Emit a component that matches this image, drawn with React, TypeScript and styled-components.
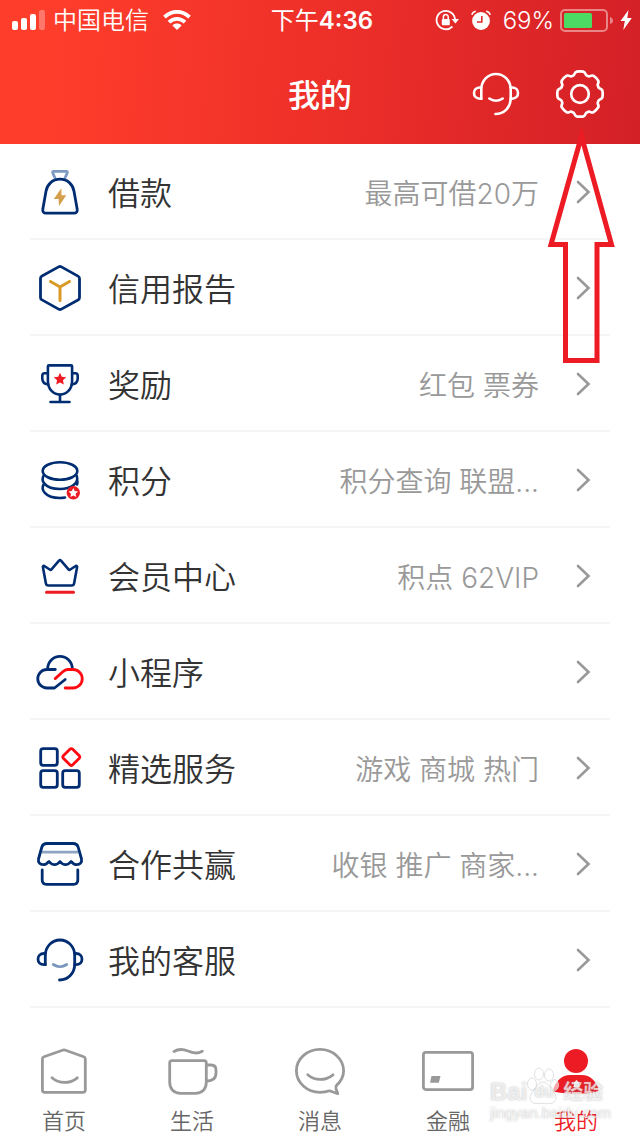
import React from "react";
import styled, { createGlobalStyle, css } from "styled-components";

const NAVY = "#002d72";
const RED = "#ed1b24";
const GREY = "#999999";

const GlobalStyle = createGlobalStyle`
  * { box-sizing: border-box; }
  body {
    margin: 0;
    background: #fff;
    color: #333;
    font-family: Inter, "Noto Sans CJK SC", sans-serif;
  }
  a { color: inherit; text-decoration: none; }
`;

const Page = styled.div`
  position: relative;
  display: flex;
  flex-direction: column;
  min-height: 100vh;
  overflow: hidden;
`;

const Header = styled.header`
  color: #fff;
  background: linear-gradient(94deg, #ff3d2b 8%, #ed2f29 52%, #d32027 100%);
`;

const StatusBar = styled.div`
  display: grid;
  grid-template-columns: 1fr auto 1fr;
  align-items: center;
  height: 40px;
  padding: 0 8px 0 12px;
  font-size: 24px;
  line-height: 32px;
`;

const StatusGroup = styled.div<{ $end?: boolean }>`
  display: flex;
  align-items: center;
  justify-content: ${(p) => (p.$end ? "flex-end" : "flex-start")};
  gap: ${(p) => (p.$end ? 12 : 8)}px;
`;

const StatusText = styled.span`
  padding-top: 2px;
  font-weight: 350;
`;

const Power = styled.span`
  display: flex;
  align-items: center;
  gap: 6px;
`;

const Carrier = styled(StatusText)`
  margin-right: 6px;
`;

const Clock = styled.time`
  padding-top: 2px;
  font-weight: 400;
`;

const Digits = styled.span`
  font-weight: 600;
`;

const TitleBar = styled.div`
  display: grid;
  grid-template-columns: 1fr auto 1fr;
  align-items: center;
  height: 104px;
  padding: 4px 36px 0;
`;

const Title = styled.h1`
  grid-column: 2;
  margin: 0;
  padding-top: 4px;
  font-size: 32px;
  line-height: 44px;
  font-weight: 500;
`;

const Actions = styled.div`
  display: flex;
  justify-content: flex-end;
  gap: 36px;
`;

const IconButton = styled.button`
  display: flex;
  padding: 0;
  border: 0;
  background: none;
  color: inherit;
  cursor: pointer;
`;

const Menu = styled.ul`
  margin: 0;
  padding: 0 30px;
  list-style: none;
`;

const MenuLink = styled.a`
  display: flex;
  align-items: center;
  height: 96px;
  padding: 2px 19px 0 6px;
  border-bottom: 2px solid #f5f5f5;
`;

const menuText = css`
  padding-top: 4px;
  line-height: 44px;
  font-weight: 350;
  white-space: nowrap;
`;

const MenuLabel = styled.span`
  ${menuText}
  flex: 1;
  margin-left: 24px;
  font-size: 32px;
`;

const MenuHint = styled.span`
  ${menuText}
  margin-right: 36px;
  color: ${GREY};
  font-size: 28px;
`;

const TabBar = styled.nav`
  display: flex;
  margin-top: auto;
  padding-top: 8px;
`;

const Tab = styled.a<{ $active?: boolean }>`
  flex: 1;
  display: flex;
  flex-direction: column;
  align-items: center;
  gap: 8px;
  color: ${(p) => (p.$active ? RED : "#666")};
  font-size: 22px;
  line-height: 30px;
  font-weight: 350;
`;

const Pointer = styled.svg`
  position: absolute;
  top: 124px;
  right: 24px;
  pointer-events: none;
`;

const Watermark = styled.div`
  position: absolute;
  right: 32px;
  bottom: 15px;
  width: 118px;
  color: rgba(255, 255, 255, 0.7);
  font-family: "Liberation Sans", "Noto Sans CJK SC", sans-serif;
  text-shadow: 0 0 2px rgba(130, 130, 130, 0.55);
  pointer-events: none;
`;

const WatermarkBrand = styled.div`
  display: flex;
  align-items: flex-end;
  font-size: 24px;
  line-height: 26px;
  font-weight: 700;
`;

const WatermarkTopic = styled.span`
  margin-left: 4px;
  font-size: 20px;
`;

const PawMark = styled.span`
  position: relative;
  display: block;
  width: 32px;
  height: 38px;
`;

const PawText = styled.span`
  position: absolute;
  left: 7px;
  bottom: 0;
  font-size: 16px;
`;

const WatermarkSite = styled.div`
  font-size: 15px;
  line-height: 16px;
`;

type LineProps = {
  size: number;
  color?: string;
  width?: number;
  children: React.ReactNode;
};

const Line = ({ size, color = "currentColor", width = 2.8, children }: LineProps) => (
  <svg
    width={size}
    height={size}
    viewBox={`0 0 ${size} ${size}`}
    fill="none"
    stroke={color}
    strokeWidth={width}
    strokeLinecap="round"
    strokeLinejoin="round"
    aria-hidden="true"
  >
    {children}
  </svg>
);

const polar = (cx: number, cy: number, r: number, deg: number) => {
  const a = ((deg - 90) * Math.PI) / 180;
  return `${(cx + r * Math.cos(a)).toFixed(2)} ${(cy + r * Math.sin(a)).toFixed(2)}`;
};

const starPath = (cx: number, cy: number, r: number) =>
  "M" +
  Array.from({ length: 10 }, (_, i) => polar(cx, cy, i % 2 ? r * 0.48 : r, i * 36)).join("L") +
  "z";

const gearPath = () => {
  const p = (r: number, deg: number) => polar(24, 24, r, deg);
  let d = `M${p(22.6, -9)}`;
  for (let a = 0; a < 360; a += 45) {
    d += `Q${p(23.1, a)} ${p(22.6, a + 9)}`;
    d += `C${p(22.2, a + 16)} ${p(19.6, a + 13)} ${p(19.6, a + 22.5)}`;
    d += `C${p(19.6, a + 32)} ${p(22.2, a + 29)} ${p(22.6, a + 36)}`;
  }
  return d + "z";
};

const Headset = ({ color, smile, width }: { color?: string; smile?: string; width?: number }) => (
  <Line size={48} color={color} width={width}>
    <path d="M9.3 28.7V19.5C9.3 10.5 16 4 24 4s14.7 6.5 14.7 15.5V28C38.7 37.5 32 44 23.5 44" />
    <path d="M9.3 17.5H8C4 17.5 2 20 2 23s2 5.7 6 5.7h1.3M38.7 17.5H40c4 0 6 2.5 6 5.5s-2 5.700-6 5.700h-1.300" />
    <path d="M17.3 28.5c4 2.8 9.4 2.8 13.4 0" stroke={smile} />
  </Line>
);

const Gear = () => (
  <Line size={48} width={2.7}>
    <path d={gearPath()} />
    <circle cx="24" cy="24" r="8.8" />
  </Line>
);

const Bag = () => (
  <Line size={48} color={NAVY}>
    <path d="M19 10l-2.3-5.3c-.3-.8.1-1.300.9-1.300h12.800c.8 0 1.200.5.9 1.300L29 10" stroke="#7d9bc0" />
    <path d="M24 11.200c7.500 0 12.800 5 14 12l3.200 18c.4 2.300-.9 4-3.200 4H10c-2.300 0-3.600-1.700-3.200-4l3.200-18c1.200-7 6.500-12 14-12z" />
    <path d="M25.300 20.300L17.800 31h4.800l.4 7 7.300-10.700h-4.800z" fill="#d5a04c" stroke="none" />
  </Line>
);

const Report = () => (
  <Line size={48} color={NAVY}>
    <path d="M22.600 2.900q1.400-.8 2.800 0l16.600 9.200q1.500.8 1.500 2.500v18.800q0 1.700-1.500 2.500l-16.600 9.200q-1.400.8-2.800 0L6 35.900q-1.500-.8-1.500-2.500V14.600q0-1.700 1.500-2.500z" />
    <path d="M14.500 17.500l9.500 5.500 9.500-5.500M24 23v13.500" stroke="#d99a26" strokeWidth="3" />
  </Line>
);

const Trophy = () => (
  <Line size={48} color={NAVY} width={2.6}>
    <path d="M12.900 5.400h22.200q1 0 1 1v14.800c0 8-5.700 13.400-12.100 13.400s-12.100-5.400-12.100-13.400V6.400q0-1 1-1z" />
    <path d="M11.800 13.200H8.600c-1.500 0-2.300 1-2.300 2.600v2.600c0 3.400 2.500 5.600 6 6M36.200 13.200h3.200c1.500 0 2.300 1 2.300 2.600v2.600c0 3.400-2.500 5.600-6 6" />
    <path d="M24 35v7M14.500 42h19" />
    <path d={starPath(24, 19.3, 6.5)} fill={RED} stroke="none" />
  </Line>
);

const Coins = () => (
  <Line size={48} color={NAVY} width={2.6}>
    <ellipse cx="24" cy="15" rx="17.300" ry="8.800" />
    <path d="M7.600 19.600C5 24 7.500 33 24 33c11 0 19-5.500 16.800-13.200" />
    <path d="M7.600 28.500C5 33 8 42 24 42c2 0 3.500-.2 5-.5M41.300 25q.4 1.600-.3 3.500" />
    <circle cx="37.300" cy="36.700" r="6.700" fill={RED} stroke="none" />
    <path d={starPath(37.3, 37, 5)} fill="#fff" stroke="none" />
  </Line>
);

const Crown = () => (
  <Line size={48} color={NAVY} width={2.6}>
    <path d="M8.300 14l5.400 3.500q1 .7 1.800-.2l7.500-8.700q1-1 2 0l7.500 8.700q.8.900 1.800.2l5.400-3.500q1.600-.6 1.400 1l-3 16.500q-.4 2-2.400 2H12.300q-2 0-2.400-2L6.900 15q-.2-1.600 1.400-1z" />
    <path d="M10.500 40.200h27" stroke={RED} strokeWidth="3" />
  </Line>
);

const Cloud = () => (
  <Line size={48} color={NAVY}>
    <path d="M11.700 21.200v-.6a12.300 12.300 0 0 1 24.600 0v.6" />
    <path d="M19.300 21.500H11a9.250 9.250 0 0 0 0 18.500h7.500l10.700-8.500" />
    <path d="M19.200 30.600l7.600-6.800q2.600-2.300 4.700-2.300H37a9.250 9.250 0 0 1 0 18.500h-7.800" stroke="#ff0a12" />
  </Line>
);

const Services = () => (
  <Line size={48} color={NAVY}>
    <rect x="4.700" y="4.700" width="16.600" height="16.600" rx="2.500" />
    <rect x="4.700" y="26.700" width="16.600" height="16.600" rx="2.500" />
    <rect x="26.700" y="26.700" width="16.600" height="16.600" rx="2.500" />
    <rect x="28.800" y="6.500" width="13" height="13" rx="2" transform="rotate(45 35.300 13)" stroke="#ff0a12" />
  </Line>
);

const Shop = () => (
  <Line size={48} color={NAVY}>
    <path d="M6 12.200h36" stroke="#8ea4c4" strokeLinecap="butt" />
    <path d="M11 3.500h26c2.800 0 4.600 1.400 5.300 4L45.500 19c.6 3.300-1.500 5.700-4.700 5.700-2.300 0-4-1.200-5.800-3.200-1.600 2-3.300 3.200-5.500 3.200s-3.900-1.200-5.500-3.200c-1.600 2-3.300 3.200-5.500 3.200s-3.900-1.200-5.500-3.200c-1.800 2-3.500 3.200-5.800 3.200-3.200 0-5.300-2.400-4.700-5.700L5.700 7.500c.7-2.600 2.500-4 5.300-4z" />
    <path d="M6.200 30v10c0 2.800 1.500 4.300 4.300 4.300h27c2.800 0 4.300-1.500 4.300-4.300V30" />
  </Line>
);

const Chevron = () => (
  <svg width="16" height="26" viewBox="0 0 16 26" fill="none" stroke={GREY} strokeWidth="2.600" strokeLinecap="round" aria-hidden="true">
    <path d="M3 3l10.500 10L3 23" />
  </svg>
);

const HomeIcon = () => (
  <Line size={52} color={GREY}>
    <path d="M25.200 4q.8-.3 1.600 0l18.900 6.800q1.600.6 1.600 2.200v31q0 2.300-2.300 2.300H6.700q-2.300 0-2.300-2.300V13q0-1.600 1.600-2.200z" />
    <path d="M14 31.800c7 6.200 17.800 6.200 25.300 0" />
  </Line>
);

const CupIcon = () => (
  <Line size={52} color={GREY}>
    <path d="M8 5.500C13 2.300 17 3 22 5s9 3.200 14.300.2" />
    <path d="M6 14.700h32c1.300 0 2.300 1 2.300 2.300v19c0 7-4 11.300-11 11.300H14.700c-7 0-11-4.300-11-11.300V17c0-1.300 1-2.300 2.300-2.300z" />
    <path d="M40.300 19H45c3.300 0 5 1.800 5 5v3c0 5-3.500 8-9.700 8" />
  </Line>
);

const ChatIcon = () => (
  <Line size={52} color={GREY}>
    <path d="M35.500 44.800C32.500 45.900 29 46.300 26 46.300 13 46.300 2.400 36.700 2.400 24.800S13 3.400 26 3.400s23.600 9.600 23.600 21.400c0 5.500-2.700 10.500-6.800 14.300-1 1-1.200 2.300-.8 3.700l1.800 4.900z" />
    <path d="M13.800 28.800c7 6.200 17.400 6.200 25.200 0" />
  </Line>
);

const CardIcon = () => (
  <Line size={52} color={GREY}>
    <rect x="1.400" y="6.400" width="49.200" height="37.200" rx="2.500" />
    <path d="M9.500 30h9l-1.700 6.700H8z" fill={GREY} stroke="none" />
  </Line>
);

const PersonIcon = () => (
  <svg width="52" height="52" viewBox="0 0 52 52" fill={RED} aria-hidden="true">
    <circle cx="26" cy="15" r="12" />
    <path d="M20 29h12c8 0 14 6 16.300 13.500.6 1.800-.2 3-2 3.600-11 2.200-29.600 2.200-40.600 0-1.800-.6-2.600-1.800-2-3.600C6 35 12 29 20 29z" />
    <path d="M26.500 34l2.500 2.500v3l1 1.500h-7l1-1.500v-3z" fill="#fff" />
  </svg>
);

const Signal = () => (
  <svg width="33" height="20" viewBox="0 0 33 20" fill="#fff" aria-hidden="true">
    <rect y="11" width="6" height="9" rx="2" />
    <rect x="9" y="8" width="6" height="12" rx="2" />
    <rect x="18" y="4" width="6" height="16" rx="2" />
    <rect x="27" width="6" height="20" rx="2" opacity=".3" />
  </svg>
);

const Wifi = () => (
  <svg width="28" height="20" viewBox="0 0 28 20" fill="none" stroke="#fff" strokeWidth="3.800" aria-hidden="true">
    <path d="M1.500 7.200c7-7 18-7 25 0" />
    <path d="M6 12.200c4.700-4.500 11.300-4.500 16 0" />
    <path d="M14 20l-4.600-4.600c2.600-2.500 6.600-2.500 9.200 0z" fill="#fff" stroke="none" />
  </svg>
);

const RotationLock = () => (
  <svg width="24" height="22" viewBox="0 0 24 22" fill="none" stroke="#fff" strokeWidth="1.800" aria-hidden="true">
    <path d="M17.400 17.500A9.200 9.200 0 1 1 20 11" />
    <path d="M16.600 10H24l-3.600 4.500z" fill="#fff" stroke="none" />
    <rect x="6.800" y="10" width="8" height="6.200" rx="1" fill="#fff" stroke="none" />
    <path d="M8.400 10.500V8a2.400 2.400 0 0 1 4.800 0v2.500" strokeWidth="1.500" />
  </svg>
);

const Alarm = () => (
  <svg width="20" height="20" viewBox="0 0 20 20" fill="none" stroke="#fff" aria-hidden="true">
    <circle cx="10" cy="11" r="8.900" fill="#fff" stroke="none" />
    <path d="M.8 4.800Q1.500 2 4.800 1.200M19.200 4.800Q18.500 2 15.200 1.200" strokeWidth="1.600" />
    <path d="M10.800 6v6H6" stroke="#e02a2a" strokeWidth="1.600" />
  </svg>
);

const Battery = () => (
  <svg width="54" height="23" viewBox="0 0 54 23" aria-hidden="true">
    <rect x="1" y="1" width="46" height="21" rx="4" fill="none" stroke="#fff" strokeOpacity=".45" strokeWidth="2" />
    <path d="M50 8q3 1 3 3.500T50 15z" fill="#fff" fillOpacity=".45" />
    <rect x="4" y="4" width="28" height="15" rx="1.500" fill="#4cd964" />
  </svg>
);

const Charging = () => (
  <svg width="12" height="20" viewBox="0 0 12 20" fill="#fff" aria-hidden="true">
    <path d="M8.500 0L.5 11h4.300L3.300 20 11.800 8H7.300z" />
  </svg>
);

const Paw = () => (
  <svg width="32" height="38" viewBox="0 0 32 38" fill="#fff" fillOpacity=".6" stroke="#d9d9d9" strokeOpacity=".8" aria-hidden="true">
    <ellipse cx="5" cy="17" rx="4.500" ry="6" />
    <ellipse cx="12" cy="7" rx="4.500" ry="6" />
    <ellipse cx="22" cy="8" rx="4.500" ry="6" />
    <ellipse cx="27.500" cy="18" rx="4" ry="5.500" />
    <path d="M16 15c5 0 6 5 9 8 6 6 5 13-2 13.500-5 .5-9-.5-14 0-7-.5-8-7.500-2-13.500 3-3 4-8 9-8z" />
  </svg>
);

const menu = [
  { label: "借款", hint: "最高可借20万", icon: <Bag /> },
  { label: "信用报告", icon: <Report /> },
  { label: "奖励", hint: "红包 票券", icon: <Trophy /> },
  { label: "积分", hint: "积分查询 联盟...", icon: <Coins /> },
  { label: "会员中心", hint: "积点 62VIP", icon: <Crown /> },
  { label: "小程序", icon: <Cloud /> },
  { label: "精选服务", hint: "游戏 商城 热门", icon: <Services /> },
  { label: "合作共赢", hint: "收银 推广 商家...", icon: <Shop /> },
  { label: "我的客服", icon: <Headset color={NAVY} smile="#7a96bd" /> },
];

const tabs = [
  { label: "首页", icon: <HomeIcon /> },
  { label: "生活", icon: <CupIcon /> },
  { label: "消息", icon: <ChatIcon /> },
  { label: "金融", icon: <CardIcon /> },
  { label: "我的", icon: <PersonIcon />, active: true },
];

export default function App() {
  return (
    <Page>
      <GlobalStyle />
      <Header>
        <StatusBar>
          <StatusGroup>
            <Signal />
            <Carrier>中国电信</Carrier>
            <Wifi />
          </StatusGroup>
          <Clock>
            下午<Digits>4:36</Digits>
          </Clock>
          <StatusGroup $end>
            <RotationLock />
            <Alarm />
            <Power>
              <StatusText>69%</StatusText>
              <Battery />
              <Charging />
            </Power>
          </StatusGroup>
        </StatusBar>
        <TitleBar>
          <Title>我的</Title>
          <Actions>
            <IconButton aria-label="客服">
              <Headset width={2.6} />
            </IconButton>
            <IconButton aria-label="设置">
              <Gear />
            </IconButton>
          </Actions>
        </TitleBar>
      </Header>
      <Menu>
        {menu.map((item) => (
          <li key={item.label}>
            <MenuLink href="#">
              {item.icon}
              <MenuLabel>{item.label}</MenuLabel>
              {item.hint && <MenuHint>{item.hint}</MenuHint>}
              <Chevron />
            </MenuLink>
          </li>
        ))}
      </Menu>
      <TabBar>
        {tabs.map((tab) => (
          <Tab key={tab.label} href="#" $active={tab.active}>
            {tab.icon}
            {tab.label}
          </Tab>
        ))}
      </TabBar>
      <Pointer width="70" height="242" viewBox="0 0 70 242" fill="none" stroke={RED} strokeWidth="5" aria-hidden="true">
        <path d="M35.500 12L5 120.500h14.500v116H51v-116h14.500z" />
      </Pointer>
      <Watermark>
        <WatermarkBrand>
          Bai
          <PawMark>
            <Paw />
            <PawText>du</PawText>
          </PawMark>
          <WatermarkTopic>经验</WatermarkTopic>
        </WatermarkBrand>
        <WatermarkSite>jingyan.baidu.com</WatermarkSite>
      </Watermark>
    </Page>
  );
}
